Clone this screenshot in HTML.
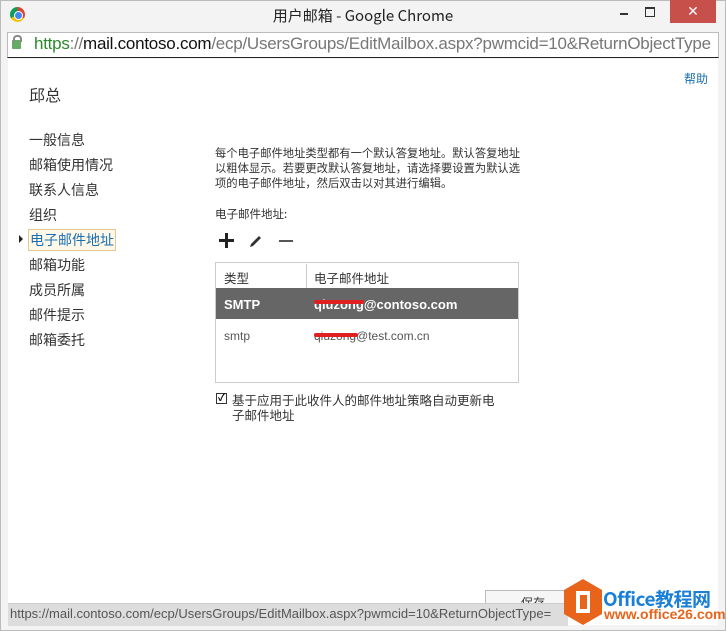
<!DOCTYPE html>
<html><head><meta charset="utf-8"><style>
body{margin:0;width:726px;height:631px;overflow:hidden;background:#e9e9e9;font-family:"Liberation Sans","Noto Sans CJK SC",sans-serif;position:relative}
.a{position:absolute}
.cn{font-family:"Noto Sans CJK SC","Microsoft YaHei",sans-serif}
</style></head><body>
<div class="a" style="left:0;top:0;width:726px;height:631px;background:#f3f3f3;border:1px solid #bbb;box-sizing:border-box"></div>
<div class="a" style="left:10px;top:7px;width:15px;height:15px;border-radius:50%;background:conic-gradient(#db4437 0 120deg,#f4c20d 120deg 240deg,#0f9d58 240deg)"></div>
<div class="a" style="left:14px;top:11px;width:7px;height:7px;border-radius:50%;background:#4285f4;border:1px solid #fff"></div>
<div class="a cn" style="left:0;width:726px;top:5px;text-align:center;font-size:15px;color:#222">用户邮箱 - Google Chrome</div>
<div class="a" style="left:620px;top:13px;width:8px;height:2px;background:#333"></div>
<div class="a" style="left:645px;top:7px;width:8px;height:7px;border:1px solid #333;border-top-width:2px"></div>
<div class="a" style="left:670px;top:0;width:46px;height:23px;background:#c7504a;color:#fff;text-align:center;font-size:14px;line-height:22px">✕</div>
<div class="a" style="left:7px;top:32px;width:712px;height:26px;background:#fff;border:1px solid #bbb;box-sizing:border-box;border-bottom:1px solid #222"></div>
<div class="a" style="left:12px;top:40px;width:9px;height:9px;background:#6a6;border-radius:1px"></div>
<div class="a" style="left:13px;top:35px;width:5px;height:5px;border:2px solid #888;border-bottom:none;border-radius:4px 4px 0 0"></div>
<div class="a" style="left:34px;top:34px;font-size:17px;white-space:nowrap;color:#777;width:684px;overflow:hidden;letter-spacing:-0.25px"><span style="color:#2a8a2a">https</span>://<span style="color:#111">mail.contoso.com</span>/ecp/UsersGroups/EditMailbox.aspx?pwmcid=10&amp;ReturnObjectType</div>
<div class="a" style="left:8px;top:59px;width:710px;height:566px;background:#fff"></div>
<div class="a cn" style="left:684px;top:70px;font-size:12px;color:#1a6fb0">帮助</div>
<div class="a cn" style="left:29px;top:82px;font-size:16px;color:#333">邱总</div>
<div class="a cn" style="left:29px;top:128px;font-size:14px;color:#333;line-height:25px">一般信息<br>邮箱使用情况<br>联系人信息<br>组织<br><span style="color:#1a6fb0;border:1px solid #e8c98a;background:#fdf8ea;margin-left:-1px;padding:0 1px">电子邮件地址</span><br>邮箱功能<br>成员所属<br>邮件提示<br>邮箱委托</div>
<div class="a" style="left:19px;top:235px;width:0;height:0;border-left:4px solid #222;border-top:4px solid transparent;border-bottom:4px solid transparent"></div>
<div class="a cn" style="left:215px;top:146px;width:310px;font-size:11.3px;color:#333;line-height:15px">每个电子邮件地址类型都有一个默认答复地址。默认答复地址以粗体显示。若要更改默认答复地址，请选择要设置为默认选项的电子邮件地址，然后双击以对其进行编辑。</div>
<div class="a cn" style="left:215px;top:206px;font-size:11.5px;color:#333">电子邮件地址:</div>
<div class="a" style="left:219px;top:239px;width:15px;height:3px;background:#222"></div>
<div class="a" style="left:225px;top:233px;width:3px;height:15px;background:#222"></div>
<svg class="a" style="left:248px;top:233px" width="16" height="16"><path d="M2 14 L3 11 L11 3 L13 5 L5 13 Z" fill="#333"/></svg>
<div class="a" style="left:279px;top:240px;width:14px;height:2px;background:#555"></div>
<div class="a" style="left:215px;top:262px;width:304px;height:121px;border:1px solid #ccc;box-sizing:border-box"></div>
<div class="a cn" style="left:224px;top:268px;font-size:12.5px;color:#333">类型</div>
<div class="a" style="left:306px;top:264px;width:1px;height:24px;background:#ccc"></div>
<div class="a cn" style="left:314px;top:268px;font-size:12.5px;color:#333">电子邮件地址</div>
<div class="a" style="left:216px;top:288px;width:302px;height:31px;background:#666"></div>
<div class="a" style="left:224px;top:297px;font-size:13px;font-weight:bold;color:#fff">SMTP</div>
<div class="a" style="left:314px;top:297px;font-size:13px;font-weight:bold;color:#fff">qiuzong@contoso.com</div>
<div class="a" style="left:314px;top:300px;width:50px;height:4px;background:#e02020;border-radius:2px"></div>
<div class="a" style="left:224px;top:329px;font-size:12px;color:#555">smtp</div>
<div class="a" style="left:314px;top:329px;font-size:12px;color:#555">qiuzong@test.com.cn</div>
<div class="a" style="left:314px;top:333px;width:44px;height:4px;background:#e02020;border-radius:2px"></div>
<div class="a" style="left:216px;top:393px;width:11px;height:11px;border:1px solid #333;box-sizing:border-box;font-size:10px;line-height:9px;text-align:center;font-weight:bold">✓</div>
<div class="a cn" style="left:232px;top:392px;width:270px;font-size:12.5px;color:#333;line-height:15px">基于应用于此收件人的邮件地址策略自动更新电子邮件地址</div>
<div class="a" style="left:485px;top:590px;width:80px;height:24px;border:1px solid #bbb;background:#f6f6f6"></div>
<div class="a cn" style="left:521px;top:594px;font-size:12px;color:#333">保存</div>
<div class="a" style="left:8px;top:603px;width:560px;height:22px;background:#ddd;border-top:1px solid #ccc"></div>
<div class="a" style="left:10px;top:606px;font-size:13px;color:#555;white-space:nowrap">https://mail.contoso.com/ecp/UsersGroups/EditMailbox.aspx?pwmcid=10&amp;ReturnObjectType=</div>
<div class="a" style="left:590px;top:603px;width:128px;height:22px;background:#fff"></div>
<svg class="a" style="left:563px;top:579px" width="40" height="46"><polygon points="20,0 39,11 39,35 20,46 1,35 1,11" fill="#e8641b"/><rect x="13" y="12" width="14" height="22" fill="#fff"/><rect x="17" y="16" width="7" height="14" fill="#e8641b"/></svg>
<div class="a cn" style="left:603px;top:585px;font-size:19px;font-weight:bold;color:#1a7fd6;white-space:nowrap;letter-spacing:-0.5px">Office教程网</div>
<div class="a" style="left:604px;top:606px;font-size:14px;font-weight:bold;color:#e8641b;white-space:nowrap">www.office26.com</div>
</body></html>
